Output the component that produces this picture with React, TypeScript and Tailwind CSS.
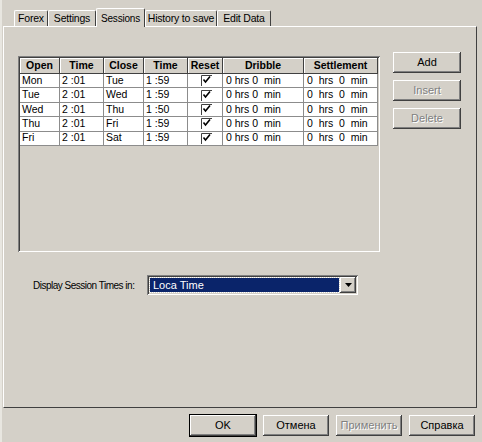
import React from 'react';

const raised =
  'shadow-[inset_-1px_-1px_0_#404040,inset_1px_1px_0_#ffffff,inset_-2px_-2px_0_#808080]';
const sunken =
  'shadow-[inset_1px_1px_0_#808080,inset_-1px_-1px_0_#ffffff,inset_2px_2px_0_#404040,inset_-2px_-2px_0_#d4d0c8]';
const disabledText = 'text-[#808080] [text-shadow:1px_1px_0_#ffffff]';

const tabs = [
  { label: 'Forex', w: 'w-[34px]' },
  { label: 'Settings', w: 'w-[48px]' },
  { label: 'Sessions', w: 'w-[49px]', active: true },
  { label: 'History to save', w: 'w-[72px]' },
  { label: 'Edit Data', w: 'w-[54px]' },
];

const columns = [
  { title: 'Open', w: 'w-[40px]' },
  { title: 'Time', w: 'w-[44px]' },
  { title: 'Close', w: 'w-[40px]' },
  { title: 'Time', w: 'w-[44px]' },
  { title: 'Reset', w: 'w-[35px]' },
  { title: 'Dribble', w: 'w-[81px]' },
  { title: 'Settlement', w: 'w-[74px]' },
];

const rows = [
  ['Mon', '2 :01', 'Tue', '1 :59'],
  ['Tue', '2 :01', 'Wed', '1 :59'],
  ['Wed', '2 :01', 'Thu', '1 :50'],
  ['Thu', '2 :01', 'Fri', '1 :59'],
  ['Fri', '2 :01', 'Sat', '1 :59'],
];

function Check() {
  return (
    <svg width="11" height="11" viewBox="0 0 11 11">
      <path d="M0.5 11V0.5H11" fill="none" stroke="#404040" strokeWidth="1" />
      <path d="M2.5 4.5l2 2.5l4.5-5.5" fill="none" stroke="#000" strokeWidth="1.6" />
    </svg>
  );
}

function Btn({ label, disabled, def, w = 'w-[68px]' }: { label: string; disabled?: boolean; def?: boolean; w?: string }) {
  return (
    <div
      className={`${w} h-[21px] flex items-center justify-center bg-[#d4d0c8] text-[11px] ${raised} ${
        def ? 'outline outline-1 outline-black' : ''
      } ${disabled ? disabledText : 'text-black'}`}
    >
      {label}
    </div>
  );
}

export default function App() {
  return (
    <div className="w-[482px] h-[442px] bg-[#d4d0c8] overflow-hidden text-black [font-family:'Liberation_Sans',Arial,sans-serif] border-l-2 border-l-[#e8e6e0]">
      {/* tab strip */}
      <div className="h-[26px] pl-[12px] flex items-end">
        {tabs.map(t =>
          t.active ? (
            <div
              key={t.label}
              className={`${t.w} h-[19px] -mb-px relative z-10 bg-[#d4d0c8] border-t border-l border-white border-r border-r-[#404040] rounded-t-[2px] flex items-start justify-center pt-[2px] text-[10px] tracking-[-0.2px]`}
            >
              {t.label}
            </div>
          ) : (
            <div
              key={t.label}
              className={`${t.w} h-[16px] border-t border-l border-white border-r border-r-[#404040] rounded-t-[2px] flex items-center justify-center text-[10.5px] tracking-[-0.2px]`}
            >
              {t.label}
            </div>
          )
        )}
      </div>

      {/* page panel */}
      <div className="ml-px w-[474px] h-[382px] border-t border-l border-white border-r border-r-[#404040] border-b border-b-[#404040] pl-[14px] pt-[29px]">
        <div className="flex items-start">
          <div className={`w-[362px] h-[196px] p-[2px] bg-[#d4d0c8] ${sunken}`}>
            <div className="flex h-[16px]">
              {columns.map((c, i) => (
                <div
                  key={i}
                  className={`${c.w} h-full flex items-center justify-center font-bold text-[10.5px] border-r border-b border-r-[#404040] border-b-[#404040] shadow-[inset_1px_1px_0_#ffffff]`}
                >
                  {c.title}
                </div>
              ))}
            </div>
            {rows.map((r, ri) => (
              <div key={ri} className="flex h-[14.4px]">
                {r.map((v, ci) => (
                  <div
                    key={ci}
                    className={`${columns[ci].w} h-full bg-white border-r border-b border-[#8c8c8c] pl-[2px] flex items-center text-[10.5px] whitespace-pre`}
                  >
                    {v}
                  </div>
                ))}
                <div className={`${columns[4].w} h-full bg-white border-r border-b border-[#8c8c8c] flex items-center justify-center pl-[2px]`}>
                  <Check />
                </div>
                <div className={`${columns[5].w} h-full bg-white border-r border-b border-[#8c8c8c] pl-[3px] flex items-center text-[10.5px] whitespace-pre`}>
                  {'0 hrs 0  min'}
                </div>
                <div className={`${columns[6].w} h-full bg-white border-r border-b border-[#8c8c8c] pl-[3px] flex items-center text-[10.5px] whitespace-pre`}>
                  {'0  hrs  0  min'}
                </div>
              </div>
            ))}
          </div>

          <div className="ml-[13px] -mt-[4px] flex flex-col gap-[7px]">
            <Btn label="Add" />
            <Btn label="Insert" disabled />
            <Btn label="Delete" disabled />
          </div>
        </div>

        <div className="mt-[23px] flex items-center">
          <span className="ml-[15px] w-[114px] text-[10px] tracking-[-0.5px]">Display Session Times in:</span>
          <div className={`w-[211px] h-[20px] bg-white p-[2px] flex ${sunken}`}>
            <div className="flex-1 m-px bg-[#0a246a] text-white text-[11px] flex items-center pl-[3px] outline outline-1 outline-dotted outline-[#d4d0c8]">
              Loca Time
            </div>
            <div className={`w-[16px] h-full bg-[#d4d0c8] flex items-center justify-center ${raised}`}>
              <svg width="7" height="4" viewBox="0 0 7 4">
                <path d="M0 0h7L3.5 4z" fill="#000" />
              </svg>
            </div>
          </div>
        </div>
      </div>

      {/* dialog buttons */}
      <div className="mt-[7px] pl-[188px] flex gap-[7px]">
        <Btn label="OK" def w="w-[66px]" />
        <Btn label="Отмена" w="w-[66px]" />
        <Btn label="Применить" disabled w="w-[66px]" />
        <Btn label="Справка" w="w-[66px]" />
      </div>
    </div>
  );
}
